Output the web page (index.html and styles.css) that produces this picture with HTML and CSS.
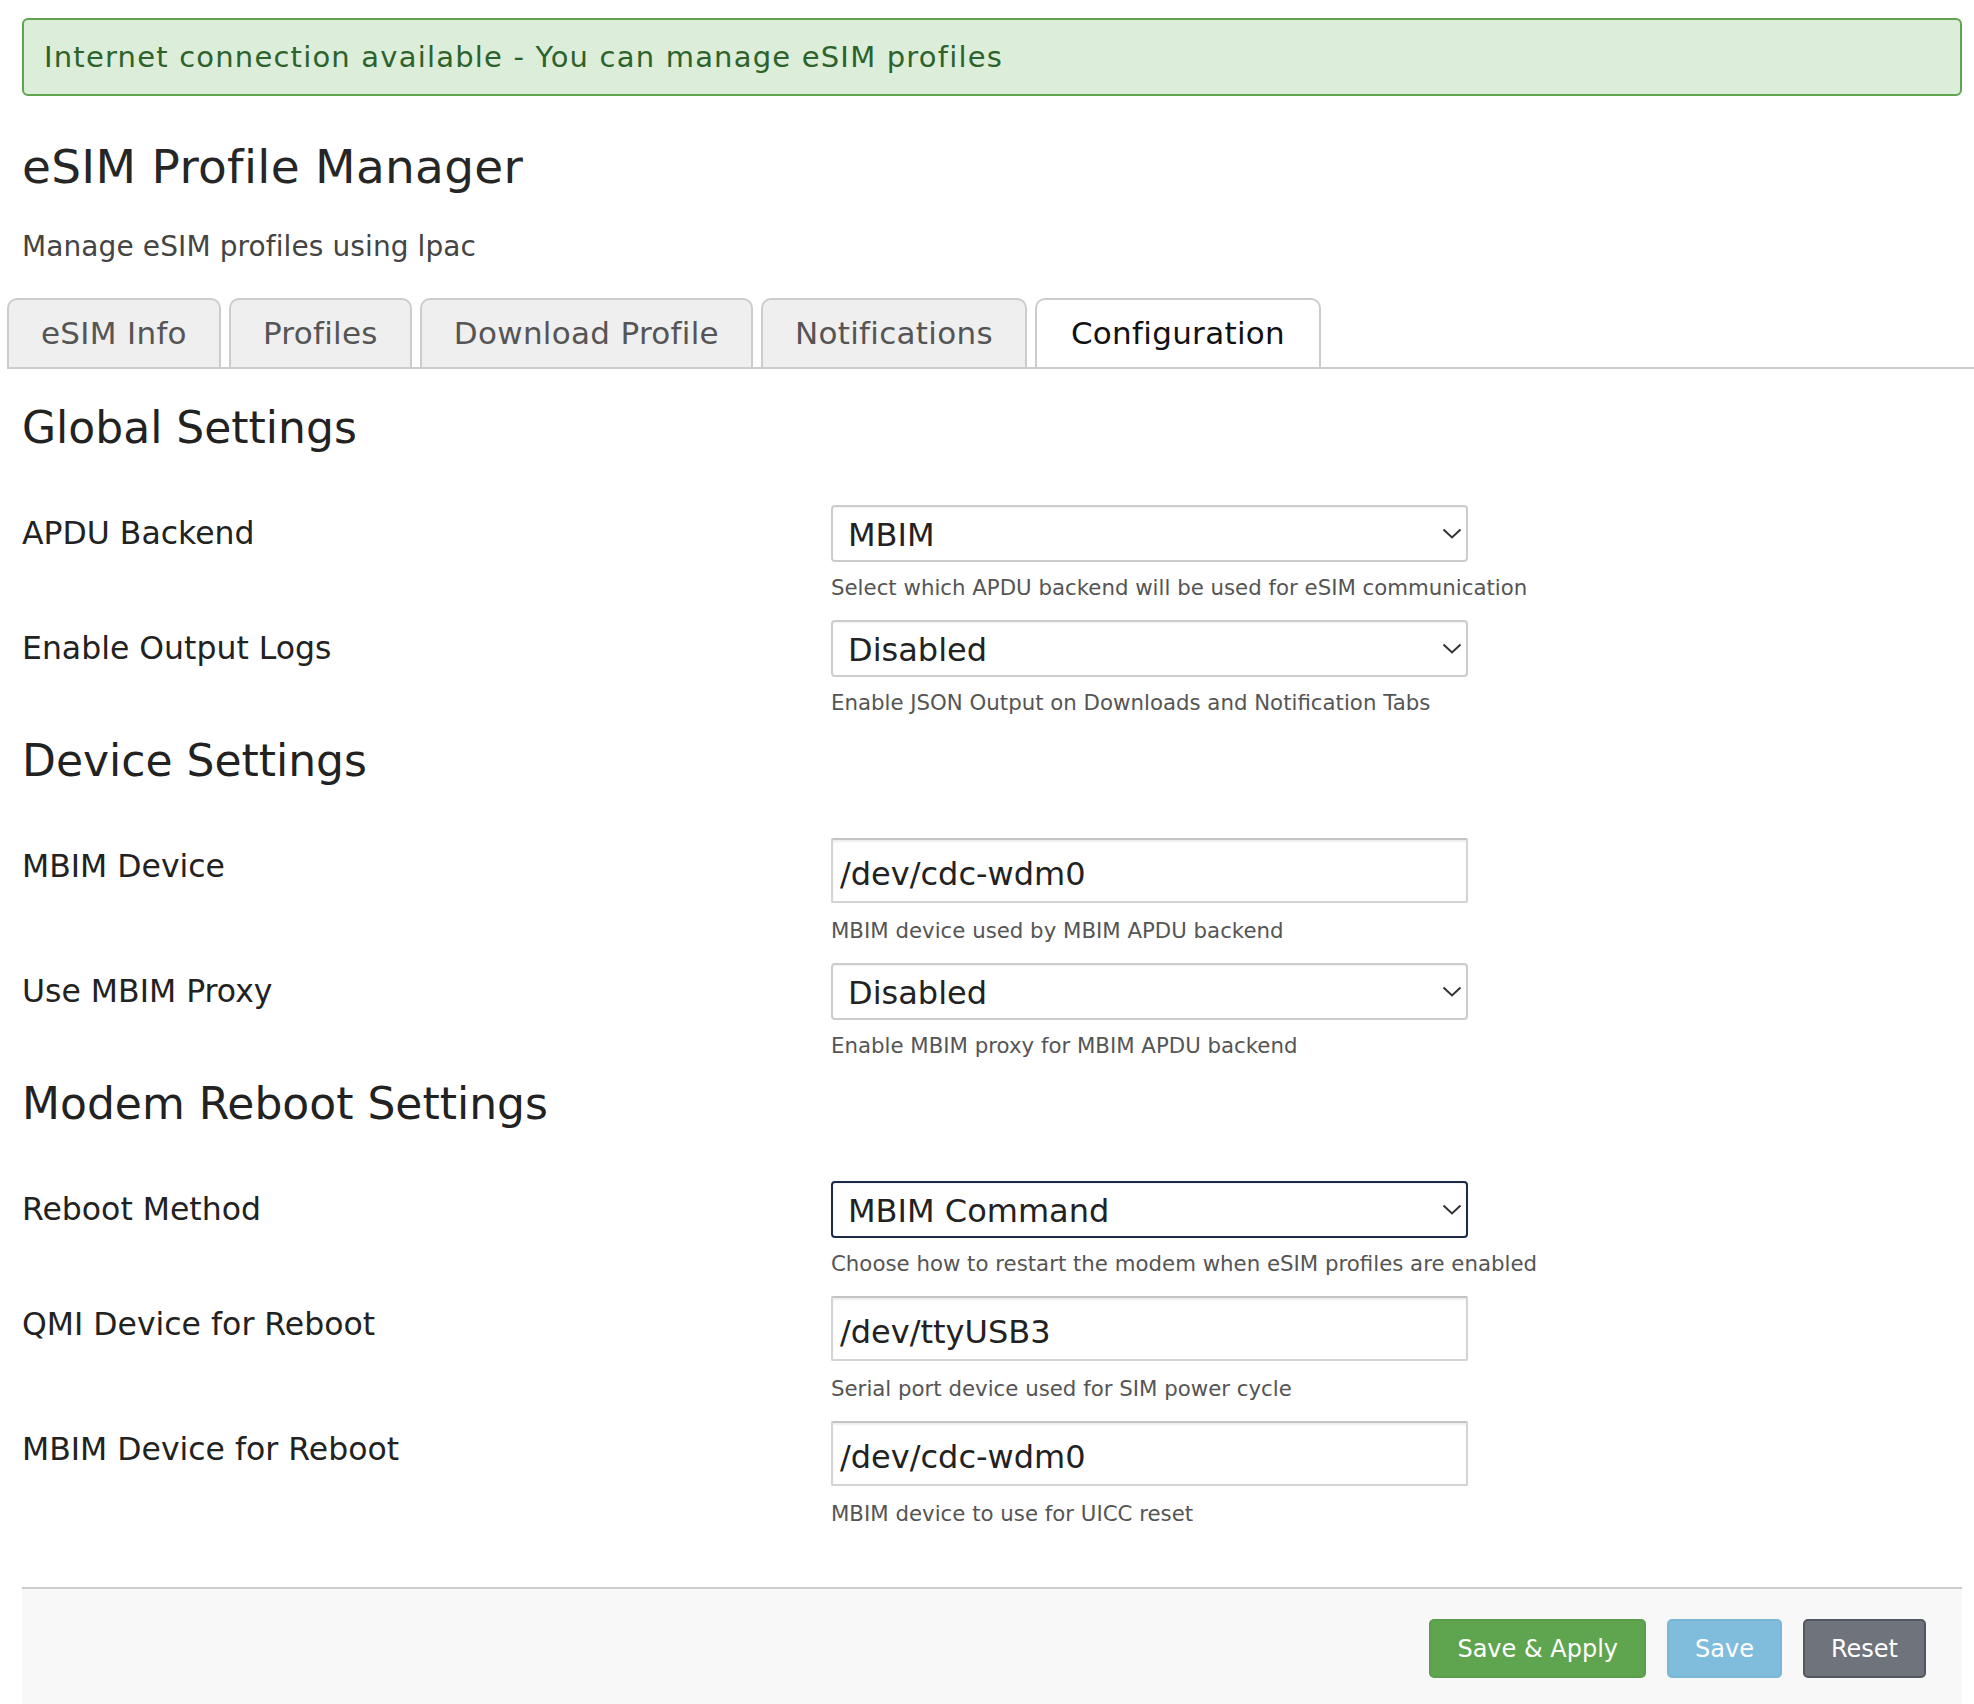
FILE: index.html
```html
<!DOCTYPE html>
<html lang="en">
<head>
<meta charset="utf-8">
<title>eSIM Profile Manager</title>
<link rel="stylesheet" href="styles.css">
</head>
<body>
<div class="page">
  <div class="alert">Internet connection available - You can manage eSIM profiles</div>
  <h1 class="title">eSIM Profile Manager</h1>
  <p class="subtitle">Manage eSIM profiles using lpac</p>
  <ul class="tabs">
    <li class="tab">eSIM Info</li>
    <li class="tab">Profiles</li>
    <li class="tab">Download Profile</li>
    <li class="tab">Notifications</li>
    <li class="tab tab-active">Configuration</li>
  </ul>

  <h2 class="section-title">Global Settings</h2>
  <div class="row">
    <div class="label">APDU Backend</div>
    <div class="field">
      <div class="select-wrap">
        <select class="select"><option>MBIM</option></select>
        <svg class="chev" width="20" height="11" viewBox="0 0 20 11"><polyline points="1.5,1.5 10,9.5 18.5,1.5" fill="none" stroke="#333" stroke-width="2"/></svg>
      </div>
      <div class="help">Select which APDU backend will be used for eSIM communication</div>
    </div>
  </div>
  <div class="row">
    <div class="label">Enable Output Logs</div>
    <div class="field">
      <div class="select-wrap">
        <select class="select"><option>Disabled</option></select>
        <svg class="chev" width="20" height="11" viewBox="0 0 20 11"><polyline points="1.5,1.5 10,9.5 18.5,1.5" fill="none" stroke="#333" stroke-width="2"/></svg>
      </div>
      <div class="help">Enable JSON Output on Downloads and Notification Tabs</div>
    </div>
  </div>

  <h2 class="section-title">Device Settings</h2>
  <div class="row">
    <div class="label">MBIM Device</div>
    <div class="field">
      <input class="input" type="text" value="/dev/cdc-wdm0">
      <div class="help help-input">MBIM device used by MBIM APDU backend</div>
    </div>
  </div>
  <div class="row">
    <div class="label">Use MBIM Proxy</div>
    <div class="field">
      <div class="select-wrap">
        <select class="select"><option>Disabled</option></select>
        <svg class="chev" width="20" height="11" viewBox="0 0 20 11"><polyline points="1.5,1.5 10,9.5 18.5,1.5" fill="none" stroke="#333" stroke-width="2"/></svg>
      </div>
      <div class="help">Enable MBIM proxy for MBIM APDU backend</div>
    </div>
  </div>

  <h2 class="section-title">Modem Reboot Settings</h2>
  <div class="row">
    <div class="label">Reboot Method</div>
    <div class="field">
      <div class="select-wrap">
        <select class="select select-focus"><option>MBIM Command</option></select>
        <svg class="chev" width="20" height="11" viewBox="0 0 20 11"><polyline points="1.5,1.5 10,9.5 18.5,1.5" fill="none" stroke="#333" stroke-width="2"/></svg>
      </div>
      <div class="help">Choose how to restart the modem when eSIM profiles are enabled</div>
    </div>
  </div>
  <div class="row">
    <div class="label">QMI Device for Reboot</div>
    <div class="field">
      <input class="input" type="text" value="/dev/ttyUSB3">
      <div class="help help-input">Serial port device used for SIM power cycle</div>
    </div>
  </div>
  <div class="row">
    <div class="label">MBIM Device for Reboot</div>
    <div class="field">
      <input class="input" type="text" value="/dev/cdc-wdm0">
      <div class="help help-input">MBIM device to use for UICC reset</div>
    </div>
  </div>

  <div class="footer">
    <button class="btn btn-apply">Save &amp; Apply</button>
    <button class="btn btn-save">Save</button>
    <button class="btn btn-reset">Reset</button>
  </div>
</div>
</body>
</html>
```
FILE: styles.css
```css
* { box-sizing: border-box; }
html, body { margin: 0; padding: 0; background: #fff; }
body {
  font-family: "DejaVu Sans", "Liberation Sans", sans-serif;
  color: #222;
}
.page {
  padding: 18px 12px 0 22px;
}
.alert {
  height: 78px;
  border: 2px solid #5fa550;
  border-radius: 6px;
  background: #dcedda;
  color: #2c632a;
  font-size: 29px;
  letter-spacing: 1.2px;
  line-height: 75px;
  padding: 0 20px;
}
.title {
  margin: 43px 0 0;
  font-size: 47px;
  letter-spacing: 0.3px;
  line-height: 56px;
  font-weight: normal;
  color: #262626;
}
.subtitle {
  margin: 35px 0 0;
  font-size: 28px;
  letter-spacing: 0.1px;
  line-height: 34px;
  color: #444;
}
.tabs {
  list-style: none;
  display: flex;
  gap: 8px;
  margin: 34px -12px 0 -15px;
  padding: 0;
  border-bottom: 2px solid #ccc;
}
.tab {
  height: 69px;
  padding: 0 32px;
  border: 2px solid #ccc;
  border-bottom: 0;
  border-radius: 10px 10px 0 0;
  background: #efefef;
  color: #555;
  font-size: 31px;
  letter-spacing: 0.3px;
  line-height: 67px;
}
.tab-active {
  background: #fff;
  color: #111;
  padding: 0 34px;
}
.section-title {
  margin: 33px 0 51px;
  font-size: 44px;
  line-height: 52px;
  font-weight: normal;
  color: #222;
}
.row + .section-title { margin-top: 0; }
.row {
  display: grid;
  grid-template-columns: 809px 637px;
  margin-bottom: 17px;
}
.label {
  font-size: 31.5px;
  line-height: 57px;
  color: #222;
}
.select-wrap {
  position: relative;
  height: 57px;
}
.select {
  -webkit-appearance: none;
  appearance: none;
  display: block;
  width: 100%;
  height: 57px;
  margin: 0;
  padding: 3px 40px 0 15px;
  border: 2px solid #ccc;
  border-radius: 4px;
  background: #fff;
  box-shadow: inset 0 1px 1px rgba(0,0,0,0.06);
  font-family: inherit;
  font-size: 32px;
  color: #222;
  outline: none;
}
.select-focus {
  border-color: #1c2a48;
}
.chev {
  position: absolute;
  right: 6px;
  top: 23px;
  pointer-events: none;
}
.input {
  display: block;
  width: 100%;
  height: 65px;
  margin: 0;
  padding: 6px 8px 0 7px;
  border: 2px solid #d4d4d4;
  border-top-color: #c4c4c4;
  border-radius: 2px;
  background: #fff;
  box-shadow: inset 0 2px 2px rgba(0,0,0,0.07);
  font-family: inherit;
  font-size: 32px;
  color: #222;
  outline: none;
}
.help {
  margin-top: 11px;
  font-size: 21.3px;
  line-height: 30px;
  color: #555;
  white-space: nowrap;
}
.help-input { margin-top: 13px; }
.footer {
  margin-top: 58px;
  border-top: 2px solid #ccc;
  background: #f8f8f8;
  padding: 30px 36px 28px;
  display: flex;
  justify-content: flex-end;
  gap: 21px;
}
.btn {
  height: 59px;
  padding: 0 26px;
  border: 2px solid transparent;
  border-radius: 5px;
  font-family: inherit;
  font-size: 24px;
  color: #fff;
  cursor: pointer;
}
.btn-apply { background: #5fa550; border-color: #5a9e4c; }
.btn-save { background: #80bcdc; border-color: #7ab6d6; }
.btn-reset { background: #6f737b; border-color: #53575f; }
```
